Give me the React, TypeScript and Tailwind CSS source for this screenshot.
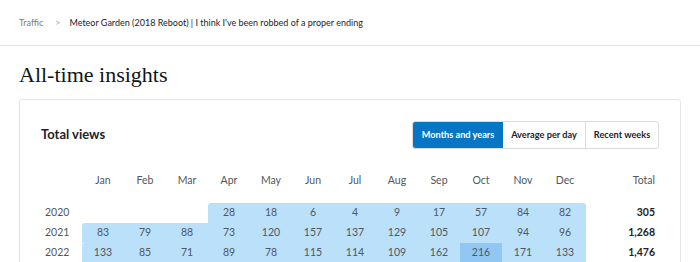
const months = ['Jan', 'Feb', 'Mar', 'Apr', 'May', 'Jun', 'Jul', 'Aug', 'Sep', 'Oct', 'Nov', 'Dec'];

interface YearRow {
  year: string;
  values: (number | null)[];
  total: string;
}

const rows: YearRow[] = [
  { year: '2020', values: [null, null, null, 28, 18, 6, 4, 9, 17, 57, 84, 82], total: '305' },
  { year: '2021', values: [83, 79, 88, 73, 120, 157, 137, 129, 105, 107, 94, 96], total: '1,268' },
  { year: '2022', values: [133, 85, 71, 89, 78, 115, 114, 109, 162, 216, 171, 133], total: '1,476' },
];

const gridCols = 'grid grid-cols-[41px_repeat(12,42px)_1fr]';

function App() {
  return (
    <div className="w-[700px] h-[262px] overflow-hidden bg-white text-[#1d2327] font-['Segoe_UI','Lato',sans-serif]">
      <div className="h-[46px] border-b border-[#e6e6e6] px-[19px] flex items-center text-[9px]">
        <span className="text-[#787c82]">Traffic</span>
        <span className="text-[#a7aaad] ml-[12px] mr-[9px]">&gt;</span>
        <span className="text-[#1d2327]">Meteor Garden (2018 Reboot) | I think I've been robbed of a proper ending</span>
      </div>

      <h1 className="px-[19px] pt-[15px] text-[22px] leading-[28px] text-[#101517] font-['Liberation_Serif',serif]">
        All-time insights
      </h1>

      <div className="mx-[19px] mt-[10px] border border-[#e2e4e7] rounded-[3px] px-[21px] pt-[21px] h-[200px]">
        <div className="flex items-center justify-between">
          <div className="text-[13px] font-bold">Total views</div>
          <div className="flex h-[28px] text-[9.2px] font-bold border border-[#dcdcde] rounded-[3px] overflow-hidden">
            <button className="w-[90px] bg-[#0675c4] text-white">Months and years</button>
            <button className="w-[83px] border-r border-[#dcdcde]">Average per day</button>
            <button className="w-[72px]">Recent weeks</button>
          </div>
        </div>

        <div className={`${gridCols} mt-[22px] h-[20px] items-center text-[10.5px] text-[#50575e]`}>
          <div />
          {months.map((m) => (
            <div key={m} className="text-center">{m}</div>
          ))}
          <div className="text-right pr-[4px]">Total</div>
        </div>

        <div className="mt-[12px] text-[10.5px] text-[#50575e]">
          {rows.map((r, ri) => (
            <div key={r.year} className={`${gridCols} h-[20px]`}>
              <div className="flex items-center pl-[4px]">{r.year}</div>
              {r.values.map((v, i) => {
                const first = v !== null && (i === 0 || r.values[i - 1] === null);
                const bg = v === null ? '' : v === 216 ? 'bg-[#90c8f3]' : 'bg-[#bbe0fa]';
                return (
                  <div
                    key={i}
                    className={`flex items-center justify-center ${bg} ${first ? 'rounded-tl-[3px]' : ''} ${ri === 0 && i === 11 ? 'rounded-tr-[3px]' : ''}`}
                  >
                    {v ?? ''}
                  </div>
                );
              })}
              <div className="flex items-center justify-end pr-[4px] font-bold text-[#1d2327]">{r.total}</div>
            </div>
          ))}
        </div>
      </div>
    </div>
  );
}

export default App;
